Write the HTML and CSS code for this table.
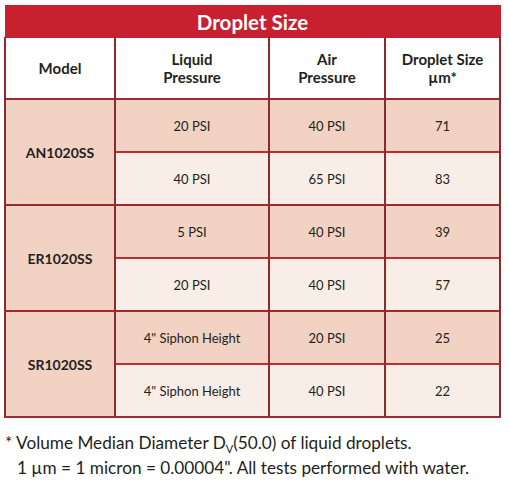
FILE: index.html
```html
<!DOCTYPE html>
<html>
<head>
<meta charset="utf-8">
<link rel="stylesheet" href="styles.css">
</head>
<body>
<div class="page">
  <table class="grid">
    <colgroup>
      <col class="c1"><col class="c2"><col class="c3"><col class="c4">
    </colgroup>
    <thead>
      <tr><th class="title" colspan="4">Droplet Size</th></tr>
      <tr class="heads">
        <th>Model</th>
        <th>Liquid<br>Pressure</th>
        <th>Air<br>Pressure</th>
        <th>Droplet Size<br>µm*</th>
      </tr>
    </thead>
    <tbody>
      <tr class="a"><td class="model" rowspan="2">AN1020SS</td><td>20 PSI</td><td>40 PSI</td><td>71</td></tr>
      <tr class="b"><td>40 PSI</td><td>65 PSI</td><td>83</td></tr>
      <tr class="a"><td class="model" rowspan="2">ER1020SS</td><td>5 PSI</td><td>40 PSI</td><td>39</td></tr>
      <tr class="b"><td>20 PSI</td><td>40 PSI</td><td>57</td></tr>
      <tr class="a"><td class="model" rowspan="2">SR1020SS</td><td>4" Siphon Height</td><td>20 PSI</td><td>25</td></tr>
      <tr class="b"><td>4" Siphon Height</td><td>40 PSI</td><td>22</td></tr>
    </tbody>
  </table>
  <div class="note">
    <p class="l1">* Volume Median Diameter D<sub>V</sub>(50.0) of liquid droplets.</p>
    <p class="l2">1 µm = 1 micron = 0.00004". All tests performed with water.</p>
  </div>
</div>
</body>
</html>
```
FILE: styles.css
```css
html, body { margin: 0; padding: 0; background: #ffffff; }
.page { padding: 5px 0 0 4px; font-family: Lato, "Open Sans", sans-serif; color: #231f20; }
.grid { border-collapse: collapse; width: 495px; table-layout: fixed; }
.c1 { width: 110px; }
.c2 { width: 154px; }
.c3 { width: 116px; }
.c4 { width: 115px; }
.grid th, .grid td { text-align: center; vertical-align: middle; padding: 0; }
.title { background: #c8202e; color: #ffffff; font-size: 20.5px; font-weight: 700; height: 31px; border: 1px solid #c8202e; }
.heads th { height: 60px; font-size: 15px; font-weight: 700; line-height: 18px; border-left: 2px solid #8e2a2f; border-right: 2px solid #8e2a2f; border-bottom: 1px solid #b8323a; background: #ffffff; }
.grid td { height: 51px; font-size: 13px; border-left: 2px solid #8e2a2f; border-right: 2px solid #8e2a2f; }
.a td { background: #f1d2c3; border-top: 2px solid #9e2a30; }
.b td { background: #f9ede7; border-top: 2px solid #c42a31; }
.grid td.model { background: #f1d2c3; font-weight: 700; font-size: 14px; }
.grid tbody tr:last-child td, .grid td.model { border-bottom: 2px solid #9e2a30; }
.note { margin-top: 12px; font-size: 17.2px; line-height: 25px; color: #231f20; }
.note p { margin: 0; }
.l1 { padding-left: 1px; }
.l2 { padding-left: 13px; }
.note sub { font-size: 11px; vertical-align: -4px; line-height: 0; }
```
